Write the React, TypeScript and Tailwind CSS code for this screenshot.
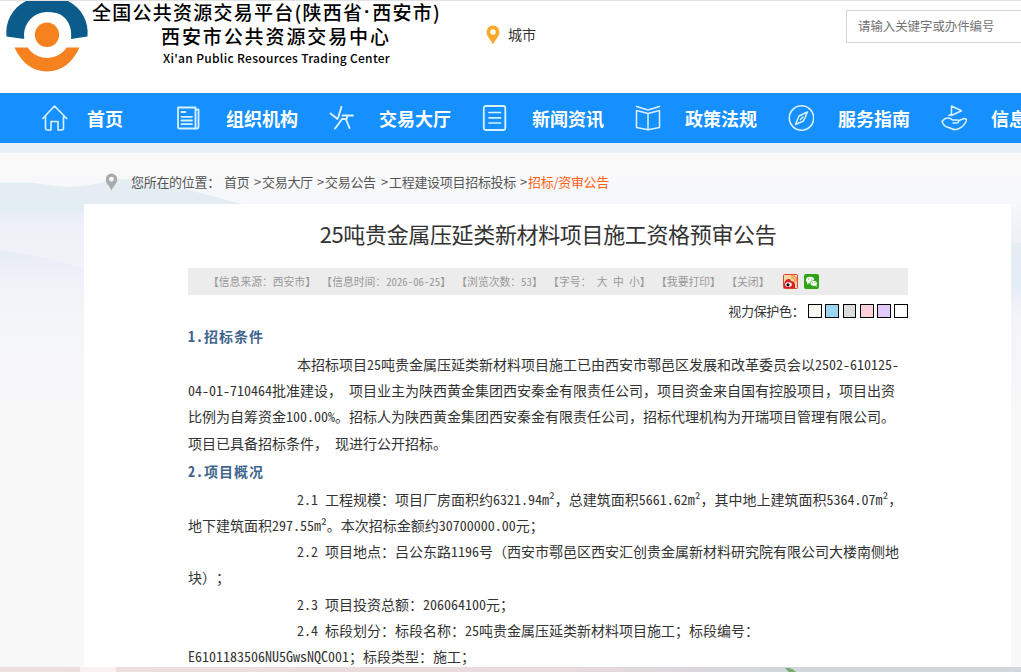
import type { ReactNode } from 'react'

const navItems = [
  { label: '组织机构', icon: <OrgIcon /> },
  { label: '交易大厅', icon: <TradeIcon /> },
  { label: '新闻资讯', icon: <NewsIcon /> },
  { label: '政策法规', icon: <BookIcon /> },
  { label: '服务指南', icon: <CompassIcon /> },
  { label: '信息公开', icon: <HandIcon /> },
]

const swatches = ['bg-[#faf6f2]', 'bg-[#9bd7f3]', 'bg-[#dcdcdc]', 'bg-[#fbd0d8]', 'bg-[#e2c8fb]', 'bg-white']

function NavSvg({ children }: { children: ReactNode }) {
  return (
    <svg width="26" height="26" viewBox="0 0 26 26" fill="none" stroke="#d9f1ff" strokeWidth="1.6" strokeLinecap="round" strokeLinejoin="round" className="shrink-0">
      {children}
    </svg>
  )
}

function HomeIcon() {
  return (
    <NavSvg>
      <path d="M0.8 13.5 12.500 1l12.2 12.5M3.500 11v12q0 2 2 2H9v-8.5h7V25h3.500q2 0 2-2V11" />
    </NavSvg>
  )
}

function OrgIcon() {
  return (
    <NavSvg>
      <path d="M2 2.500h17.500V23.500H3.500q-1.500 0-1.500-1.500zM19.500 4.500h3V22q0 1.500-1.500 1.500h-2" strokeWidth="1.800" />
      <path d="M5.500 7h4M5.500 11.800h10.500M5.500 15.500h10.500M5.500 19.200h10.500" strokeWidth="1.800" />
    </NavSvg>
  )
}

function TradeIcon() {
  return (
    <NavSvg>
      <path d="M12.500 1.800 9.500 11.500M1.500 8.500 8.500 14M24 10.500H13.500M17 14.500l3.500 8.500M13 14l3 0M13 14l-3.500 5L6 23.500M9.500 11.500l-.5 1M18.500 10.500l-1 4" strokeWidth="1.900" />
    </NavSvg>
  )
}

function NewsIcon() {
  return (
    <NavSvg>
      <rect x="1.800" y="1" width="21.500" height="24" rx="2" strokeWidth="1.800" />
      <path d="M7 7.500h1.500M9.500 7.500h9M7 12.800h11.500M7 18h1.500M9.500 18h9" strokeWidth="1.700" />
    </NavSvg>
  )
}

function BookIcon() {
  return (
    <NavSvg>
      <path d="M1.500 1.500 13 5l11.500-3.500M1.500 5.500V22.500L13 24.800l11.500-2.300V5.500L13 8.500zM13 8.500V24.800" strokeWidth="1.500" />
    </NavSvg>
  )
}

function CompassIcon() {
  return (
    <NavSvg>
      <circle cx="13.500" cy="13" r="12.200" />
      <path d="M19.500 7 15.500 16 7.500 19.500 11 11zM12.500 14.500 15 12" strokeWidth="1.500" />
    </NavSvg>
  )
}

function HandIcon() {
  return (
    <NavSvg>
      <path d="M10.500 1v9.500L20.500 5.800zM8 10.500 10.500 9M1 16.500q2-3 5-3.500 3-.5 5.500 2h5q1.500.5 1 1.800t-2 1.200H12M18 15.500l5-2q3 0 2.300 2.500-2.500 6-9 8.200-3 1-6-.7L6 22q-3-.5-5-5.500" strokeWidth="1.500" />
    </NavSvg>
  )
}

function Pin({ color, className }: { color: string; className: string }) {
  return (
    <svg viewBox="0 0 14 20" className={className}>
      <path d="M7 .5a6.400 6.400 0 0 0-6.400 6.400C.6 11.500 5 14.500 7 19.500c2-5 6.400-8 6.400-12.600A6.400 6.400 0 0 0 7 .5Zm0 3.700a2.700 2.700 0 1 1 0 5.400 2.700 2.700 0 0 1 0-5.400Z" fill={color} fillRule="evenodd" />
    </svg>
  )
}

function Logo() {
  return (
    <svg width="84" height="72" viewBox="0 0 84 72" className="shrink-0">
      <path d="M1.500 35.500C0 21 7 7 21 0h42c14 7 21 21 19.500 35.500L66 38c2-15-7-26.500-19-26.500S21.500 22 19.500 38Z" fill="#0b5c8b" />
      <path d="M9.500 46.500h14c11 12.500 30 12.500 38 0h13C68 61 57 70.500 42 70.500S16 61 9.500 46.500Z" fill="#f5821f" />
      <circle cx="42" cy="34" r="23" fill="#fff" />
      <circle cx="42" cy="33.800" r="12.200" fill="#f5821f" />
    </svg>
  )
}

function Scenery() {
  return (
    <svg width="1021" height="519" viewBox="0 0 1021 519" preserveAspectRatio="none" className="absolute top-0 left-0">
      <defs>
        <linearGradient id="sky" x1="0" y1="0" x2="0" y2="1">
          <stop offset="0" stopColor="#f9f9f9" />
          <stop offset="0.090" stopColor="#f7f8fa" />
          <stop offset="0.150" stopColor="#eff1f8" />
          <stop offset="0.280" stopColor="#f3f4fa" />
          <stop offset="0.500" stopColor="#f8f8f9" />
          <stop offset="1" stopColor="#f8f8f8" />
        </linearGradient>
        <linearGradient id="hill" x1="0" y1="0" x2="0" y2="1">
          <stop offset="0" stopColor="#e6eef3" />
          <stop offset="0.500" stopColor="#e2ecf3" />
          <stop offset="1" stopColor="#edf0f8" stopOpacity="0" />
        </linearGradient>
        <linearGradient id="ridge" x1="0" y1="0" x2="0" y2="1">
          <stop offset="0" stopColor="#e7ecf5" />
          <stop offset="1" stopColor="#f2f3fa" stopOpacity="0" />
        </linearGradient>
      </defs>
      <rect width="1021" height="519" fill="url(#sky)" />
      <path d="M0 30q25-2 50 2 30 5 60-5 12-3 28 1 40 5 70 14l45 12v30H0Z" fill="url(#hill)" />
      <path d="M0 97q45 6 84 18v45H0Z" fill="url(#ridge)" />
      <path d="M1005 90h16v80h-16Z" fill="url(#hill)" />
    </svg>
  )
}

// full-width punctuation keeps its full box, only digits and latin go half-width
function Line({ text, indent }: { text: string; indent?: boolean }) {
  return (
    <p className={indent ? 'pl-[109px]' : ''}>
      {text.split(/([，（）]+)/).map((part, i) =>
        i % 2 ? (
          <span key={i} className="[font-feature-settings:normal]">{part}</span>
        ) : (
          part
        ),
      )}
    </p>
  )
}

function SectionTitle({ children }: { children: ReactNode }) {
  return <h2 className="h-[30px] leading-[30px] font-bold tracking-[1px] text-[#41658f]">{children}</h2>
}

function Crumb({ label, className }: { label: string; className: string }) {
  return (
    <span className={`flex justify-between pr-px ${className}`}>
      <span>{label}</span>
      <span>&gt;</span>
    </span>
  )
}

export default function App() {
  return (
    <div className="relative flex h-[672px] w-[1021px] flex-col overflow-hidden bg-white font-['Noto_Sans_CJK_SC',sans-serif] whitespace-pre text-[#333] [text-spacing-trim:space-all]">
      <header className="flex h-[93px] shrink-0 border-t border-[#e2e2e2]">
        <div className="flex w-[480px] shrink-0 pl-[5px]">
          <Logo />
          <div className="ml-[3px] flex flex-col font-medium text-black">
            <div className="-mt-px flex h-6 text-[19px] leading-6 tracking-[1.25px]">
              <span>全国公共资源交易平台(陕西省</span>
              <span className="w-[9px] text-center font-['Liberation_Sans',sans-serif] font-bold">·</span>
              <span>西安市)</span>
            </div>
            <div className="h-6 pl-[69px] text-[19px] leading-6 tracking-[1.9px]">西安市公共资源交易中心</div>
            <div className="pl-[71px] text-[12px] leading-[19px] tracking-[0.31px]">Xi'an Public Resources Trading Center</div>
          </div>
        </div>
        <div className="flex h-[67px] w-[366px] shrink-0 items-center gap-2 pl-[6px] text-[14px]">
          <Pin color="#fba92b" className="h-[20px] w-[14px]" />
          城市
        </div>
        <div className="mt-[9px] flex h-[33px] w-[200px] shrink-0 items-center border border-[#d4d4d4] pl-[11px] text-[12.5px] tracking-[-0.1px] text-[#757575]">
          请输入关键字或办件编号
        </div>
      </header>

      <nav className="flex h-[50px] shrink-0 items-center bg-[#1690ff] pl-[42px] text-[18px] font-bold text-white">
        <div className="mr-[53px] flex shrink-0 items-center gap-[19px]">
          <HomeIcon />
          首页
        </div>
        {navItems.map((item) => (
          <div key={item.label} className="mr-[31px] flex shrink-0 items-center gap-[24px]">
            {item.icon}
            {item.label}
          </div>
        ))}
      </nav>
      <div className="h-[10px] shrink-0 bg-[#e8f0f5]" />

      <main className="relative h-[519px] shrink-0 pt-[16px]">
        <Scenery />
        <div className="relative flex h-[26px] items-center pl-[105px] text-[13px] tracking-[-0.3px] text-[#555]">
          <Pin color="#aaaaaa" className="mr-[13px] h-[18px] w-[13px]" />
          <span className="w-[93px]">您所在的位置：</span>
          <Crumb label="首页" className="w-[38px]" />
          <Crumb label="交易大厅" className="w-[63px]" />
          <Crumb label="交易公告" className="w-[64px]" />
          <Crumb label="工程建设项目招标投标" className="w-[139px]" />
          <span className="text-[#ff6319]">招标/资审公告</span>
        </div>

        <article className="relative mt-[9px] ml-[84px] h-[463px] w-[927px] bg-white px-[104px]">
          <h1 className="h-[64px] w-[720px] text-center text-[22px] leading-[58px] tracking-[-0.35px]">25吨贵金属压延类新材料项目施工资格预审公告</h1>
          <div className="flex h-[27px] w-[720px] items-center bg-[#ececec] pl-[20px] text-[10.8px] text-[#999]">
            <span className="[font-feature-settings:'hwid']">【信息来源：西安市】 【信息时间：2026-06-25】 【浏览次数：53】 【字号： 大 中 小】 【我要打印】 【关闭】</span>
            <svg width="15" height="15" viewBox="0 0 15 15" className="absolute left-[699px]">
              <rect x="0.500" y="0.500" width="14" height="14" rx="1" fill="#fbd9a0" stroke="#d9432f" />
              <path d="M1 10Q2 5 6 5q2 0 2 2 3 0 4 3v4H1Z" fill="#d8232a" />
              <ellipse cx="5.500" cy="10.500" rx="3.300" ry="2.300" fill="#fff" />
              <circle cx="5" cy="10.800" r="1.600" fill="#111" />
              <path d="M8 4q4-1 4 4M8 1.800q6-.5 6 6" fill="none" stroke="#ee7a25" />
            </svg>
            <svg width="15" height="15" viewBox="0 0 15 15" className="absolute left-[720px]">
              <rect width="15" height="15" rx="2" fill="#2fa316" />
              <ellipse cx="6" cy="6" rx="4" ry="3.300" fill="#fff" />
              <path d="m3.500 8-.5 2.500 2.500-1.500Z" fill="#fff" />
              <ellipse cx="9.800" cy="9.300" rx="3.500" ry="2.900" fill="#fff" stroke="#2fa316" strokeWidth="0.700" />
              <path d="m11 11.500 1.500 1.500v-2.500Z" fill="#fff" />
              <circle cx="4.700" cy="5" r=".6" fill="#2fa316" />
              <circle cx="7.300" cy="5" r=".6" fill="#2fa316" />
              <circle cx="8.700" cy="8.700" r=".5" fill="#2fa316" />
              <circle cx="11" cy="8.700" r=".5" fill="#2fa316" />
            </svg>
          </div>
          <div className="flex h-[26px] w-[720px] items-end justify-end text-[13px] leading-[20px] tracking-[-0.3px]">
            <span className="w-[80px]">视力保护色：</span>
            <div className="mb-[3px] flex gap-[3.4px]">
              {swatches.map((color) => (
                <span key={color} className={`h-[14px] w-[13.8px] border border-black ${color}`} />
              ))}
            </div>
          </div>

          <div className="text-[14px] leading-[26.2px] [font-feature-settings:'hwid']">
            <SectionTitle>1.招标条件</SectionTitle>
            <Line indent text="本招标项目25吨贵金属压延类新材料项目施工已由西安市鄠邑区发展和改革委员会以2502-610125-" />
            <Line text="04-01-710464批准建设， 项目业主为陕西黄金集团西安秦金有限责任公司，项目资金来自国有控股项目，项目出资" />
            <Line text="比例为自筹资金100.00%。招标人为陕西黄金集团西安秦金有限责任公司，招标代理机构为开瑞项目管理有限公司。" />
            <Line text="项目已具备招标条件， 现进行公开招标。" />
            <SectionTitle>2.项目概况</SectionTitle>
            <Line indent text="2.1 工程规模：项目厂房面积约6321.94m²，总建筑面积5661.62m²，其中地上建筑面积5364.07m²，" />
            <Line text="地下建筑面积297.55m²。本次招标金额约30700000.00元；" />
            <Line indent text="2.2 项目地点：吕公东路1196号（西安市鄠邑区西安汇创贵金属新材料研究院有限公司大楼南侧地" />
            <Line text="块）；" />
            <Line indent text="2.3 项目投资总额：206064100元；" />
            <Line indent text="2.4 标段划分：标段名称：25吨贵金属压延类新材料项目施工；标段编号：" />
            <Line text="E6101183506NU5GwsNQC001；标段类型：施工；" />
          </div>
        </article>
      </main>

      <div className="absolute bottom-0 left-0 flex h-[5px] w-full bg-linear-to-r from-[#f0dfe0] via-[#e9dadd] via-55% to-[#d3d7dc] to-75%">
        <div className="ml-[80px] w-[36px] bg-[#faf1f3]" />
        <svg width="14" height="4" viewBox="0 0 14 4" className="mt-px ml-[669px]">
          <path d="M0 0q6-1 11 4H4Z" fill="#6fae6b" />
        </svg>
      </div>
    </div>
  )
}
